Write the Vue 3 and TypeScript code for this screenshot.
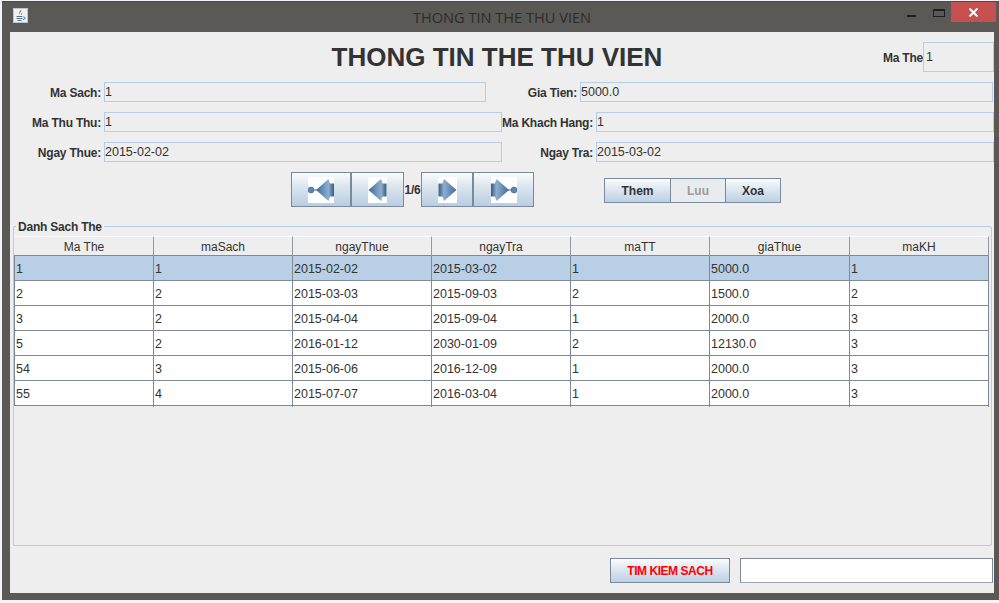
<script setup lang="ts">
interface Field { label: string; value: string; width: number }

const columns: string[] = ['Ma The', 'maSach', 'ngayThue', 'ngayTra', 'maTT', 'giaThue', 'maKH']
const rows: string[][] = [
  ['1', '1', '2015-02-02', '2015-03-02', '1', '5000.0', '1'],
  ['2', '2', '2015-03-03', '2015-09-03', '2', '1500.0', '2'],
  ['3', '2', '2015-04-04', '2015-09-04', '1', '2000.0', '3'],
  ['5', '2', '2016-01-12', '2030-01-09', '2', '12130.0', '3'],
  ['54', '3', '2015-06-06', '2016-12-09', '1', '2000.0', '3'],
  ['55', '4', '2015-07-07', '2016-03-04', '1', '2000.0', '3'],
]
const formRows: Field[][] = [
  [
    { label: 'Ma Sach:', value: '1', width: 382 },
    { label: 'Gia Tien:', value: '5000.0', width: 413 },
  ],
  [
    { label: 'Ma Thu Thu:', value: '1', width: 398 },
    { label: 'Ma Khach Hang:', value: '1', width: 398 },
  ],
  [
    { label: 'Ngay Thue:', value: '2015-02-02', width: 398 },
    { label: 'Ngay Tra:', value: '2015-03-02', width: 398 },
  ],
]
</script>

<template>
  <div class="window">
    <header class="titlebar">
      <svg class="app-icon" width="15" height="15" viewBox="0 0 15 15">
        <rect x="0.5" y="0.5" width="14" height="14" fill="#eef2f6" stroke="#b9c6d4" />
        <path d="M8 1.5C9.5 3.5 6 4.5 7 7C5.5 5.5 6 3.5 8 1.5Z M9 4.5C10 5.5 8 6.5 8.5 7.5C7.5 6.5 8 5.5 9 4.5Z" fill="#e2701c" />
        <path d="M3.5 8.5H9.5M3.5 10.5H9.5M4.5 12.5H8.5" stroke="#53718f" stroke-width="1" fill="none" />
        <path d="M10.5 9C13 9 12.5 11.5 10 11.5" stroke="#53718f" fill="none" />
      </svg>
      <div class="window-title">THONG TIN THE THU VIEN</div>
      <div class="controls">
        <span class="min"></span>
        <span class="max"></span>
        <span class="close">
          <svg width="11" height="9" viewBox="0 0 11 9"><path d="M1.5 0.5L9.5 8.5M9.5 0.5L1.5 8.5" stroke="#fff" stroke-width="2" /></svg>
        </span>
      </div>
    </header>

    <main class="client">
      <div class="head">
        <h1 class="main-title">THONG TIN THE THU VIEN</h1>
        <div class="mathe">
          <label class="lbl">Ma The</label>
          <div class="field mathe-field">1</div>
        </div>
      </div>

      <div class="form">
        <div v-for="(row, i) in formRows" :key="i" class="form-row">
          <template v-for="f in row" :key="f.label">
            <label class="lbl lbl-fixed">{{ f.label }}</label>
            <div class="field" :style="{ width: f.width + 'px' }">{{ f.value }}</div>
          </template>
        </div>
      </div>

      <div class="toolbar">
        <div class="nav">
          <button class="nbtn w60">
            <svg width="26" height="26" viewBox="0 0 26 26">
              <defs>
                <linearGradient id="ga" x1="0" y1="0" x2="1" y2="0">
                  <stop offset="0" stop-color="#3f6a97" />
                  <stop offset="0.7" stop-color="#8eaed0" />
                  <stop offset="1" stop-color="#39597c" />
                </linearGradient>
                <linearGradient id="gb" x1="0" y1="0" x2="1" y2="0">
                  <stop offset="0" stop-color="#39597c" />
                  <stop offset="0.3" stop-color="#8eaed0" />
                  <stop offset="1" stop-color="#3f6a97" />
                </linearGradient>
              </defs>
              <rect width="26" height="26" fill="#fff" />
              <circle cx="3" cy="13" r="3" fill="#5d86ad" stroke="#3e638a" stroke-width="0.6" />
              <path d="M6 13H9" stroke="#3e638a" />
              <path d="M8 13L20.5 2L22 6.5H26V19.5H22L20.5 24Z" fill="url(#ga)" />
            </svg>
          </button>
          <button class="nbtn w53">
            <svg width="19" height="26" viewBox="0 0 19 26">
              <rect width="19" height="26" fill="#fff" />
              <path d="M0.5 13L13 2L14.5 6.5H18.5V19.5H14.5L13 24Z" fill="url(#ga)" />
            </svg>
          </button>
          <span class="page">1/6</span>
          <button class="nbtn w52">
            <svg width="19" height="26" viewBox="0 0 19 26">
              <rect width="19" height="26" fill="#fff" />
              <path d="M18.5 13L6 2L4.5 6.5H0.5V19.5H4.5L6 24Z" fill="url(#gb)" />
            </svg>
          </button>
          <button class="nbtn w61">
            <svg width="26" height="26" viewBox="0 0 26 26">
              <rect width="26" height="26" fill="#fff" />
              <circle cx="23" cy="13" r="3" fill="#5d86ad" stroke="#3e638a" stroke-width="0.6" />
              <path d="M17 13H20" stroke="#3e638a" />
              <path d="M18 13L5.5 2L4 6.5H0V19.5H4L5.5 24Z" fill="url(#gb)" />
            </svg>
          </button>
        </div>
        <div class="actions">
          <button class="abtn them">Them</button>
          <button class="abtn luu">Luu</button>
          <button class="abtn xoa">Xoa</button>
        </div>
      </div>

      <section class="panel">
        <span class="legend">Danh Sach The</span>
        <div class="table">
          <div class="thead">
            <div v-for="c in columns" :key="c" class="th">{{ c }}</div>
          </div>
          <div v-for="(r, i) in rows" :key="i" class="tr" :class="{ selected: i === 0 }">
            <div v-for="(v, j) in r" :key="j" class="td">{{ v }}</div>
          </div>
        </div>
      </section>

      <div class="footer">
        <button class="search">TIM KIEM SACH</button>
        <div class="search-input"></div>
      </div>
    </main>
  </div>
</template>

<style>
html, body { margin: 0; background: #f2f4f7; overflow: hidden; }
</style>

<style scoped>
* { box-sizing: border-box; }
.window {
  width: 997px;
  height: 599px;
  margin: 1px 0 0 2px;
  padding: 0 4px 7px 8px;
  background: #5a5955;
  border-top: 1px solid #4a4a48;
  display: flex;
  flex-direction: column;
  font-family: "Liberation Sans", Arial, sans-serif;
  color: #333;
  font-size: 12px;
}
.titlebar {
  height: 30px;
  display: flex;
  align-items: flex-start;
}
.app-icon { margin: 6px 0 0 3px; flex: none; }
.window-title {
  flex: 1;
  text-align: center;
  font-family: "Open Sans", "Noto Sans", sans-serif;
  font-size: 14.6px;
  line-height: 20px;
  margin-top: 5px;
  color: #2c2c2c;
  padding-left: 70px;
}
.controls { display: flex; align-items: flex-start; width: 90px; flex: none; margin-right: -1px; }
.min { width: 9px; height: 2px; background: #1f1f1f; margin: 13px 0 0 1px; }
.max { width: 12px; height: 8px; border: 1px solid #1f1f1f; border-top-width: 2px; margin: 7px 0 0 17px; }
.close {
  width: 45px; height: 20px; margin: 0 0 0 6px; background: #c75050;
  display: flex; align-items: center; justify-content: center;
}
.client {
  flex: 1;
  background: #eeeeee;
  display: flex;
  flex-direction: column;
  width: 984px;
}
.head { height: 40px; padding-top: 10px; display: flex; position: relative; }
.main-title {
  margin: 0;
  flex: none;
  width: 974px;
  text-align: center;
  font-size: 26px;
  font-weight: 700;
  line-height: 30px;
  color: #333;
}
.mathe { position: absolute; top: 10px; right: 0; display: flex; height: 30px; }
.lbl { font-weight: 700; font-size: 12px; letter-spacing: -0.22px; text-align: right; flex: none; white-space: nowrap; line-height: 20px; padding-top: 1px; }
.mathe .lbl { line-height: 30px; }
.lbl-fixed { width: 91px; }
.field {
  height: 20px;
  border: 1px solid #b5cde6;
  background: #eeeeee;
  font-size: 12.5px;
  line-height: 19px;
  padding-left: 0;
  margin-left: 3px;
  flex: none;
}
.mathe .mathe-field { width: 71px; height: 30px; margin-left: 0; padding-left: 2px; line-height: 29px; }
.form { margin-top: 10px; display: flex; flex-direction: column; gap: 10px; }
.form-row { display: flex; height: 20px; }
.toolbar { margin-top: 10px; height: 35px; display: flex; align-items: center; padding-left: 281px; }
.nav { display: flex; align-items: center; height: 35px; }
.nbtn {
  height: 35px;
  border: 1px solid #7a8a9c;
  background: linear-gradient(#fbfcfd, #dfe8f1 35%, #b9cde2);
  padding: 0;
  display: flex;
  align-items: center;
  justify-content: center;
}
.w60 { width: 60px; }
.w53 { width: 53px; }
.w52 { width: 52px; }
.w61 { width: 61px; }
.page { width: 17px; font-weight: 700; text-align: center; letter-spacing: -0.2px; }
.actions { margin: 2px 0 0 70px; display: flex; height: 25px; }
.abtn {
  height: 25px;
  border: 1px solid #7a8a9c;
  background: linear-gradient(#fbfcfd, #e3ebf3 35%, #bcd0e4);
  font: 700 12px "Liberation Sans", Arial, sans-serif;
  color: #333;
  padding: 0;
}
.abtn + .abtn { margin-left: -1px; }
.them { width: 67px; }
.luu { width: 56px; color: #9c9a98; background: #e9ecef; }
.xoa { width: 56px; }
.panel {
  margin: 19px 0 0 3px;
  width: 979px;
  height: 320px;
  border: 1px solid #b5cde6;
  border-radius: 2px;
  padding: 9px 0 0 0;
  position: relative;
}
.legend {
  position: absolute;
  left: 2px;
  top: -7px;
  padding: 0 2px;
  font-size: 12px;
  letter-spacing: -0.22px;
  line-height: 14px;
  background: #eeeeee;
  font-weight: 700;
}
.table { width: 975px; }
.thead, .tr { display: grid; grid-template-columns: 139px 139px 139px 139px 139px 140px 139px; }
.thead { height: 20px; border-bottom: 1px solid #7d8a99; padding-left: 1px; }
.th {
  text-align: center;
  line-height: 20px;
  border-right: 1px solid #8f9aa6;
  border-top: 1px solid #fff;
}
.tr { height: 25px; background: #fff; border-bottom: 1px solid #7d8a99; border-left: 1px solid #7d8a99; }
.tr.selected { background: #b8cfe5; }
.td {
  padding-left: 1px;
  line-height: 26px;
  font-size: 12.5px;
  border-right: 1px solid #7d8a99;
}
.footer { margin-top: 12px; display: flex; padding-left: 600px; }
.search {
  width: 120px;
  height: 25px;
  border: 1px solid #7a8a9c;
  background: linear-gradient(#fbfcfd, #e3ebf3 35%, #bcd0e4);
  color: #f00;
  font: 700 12px "Liberation Sans", Arial, sans-serif;
  letter-spacing: -0.45px;
  padding: 0;
}
.search-input {
  width: 253px;
  height: 25px;
  margin-left: 10px;
  background: #fff;
  border: 1px solid #7d8a99;
  border-bottom-color: #9aa5b1;
}
</style>
